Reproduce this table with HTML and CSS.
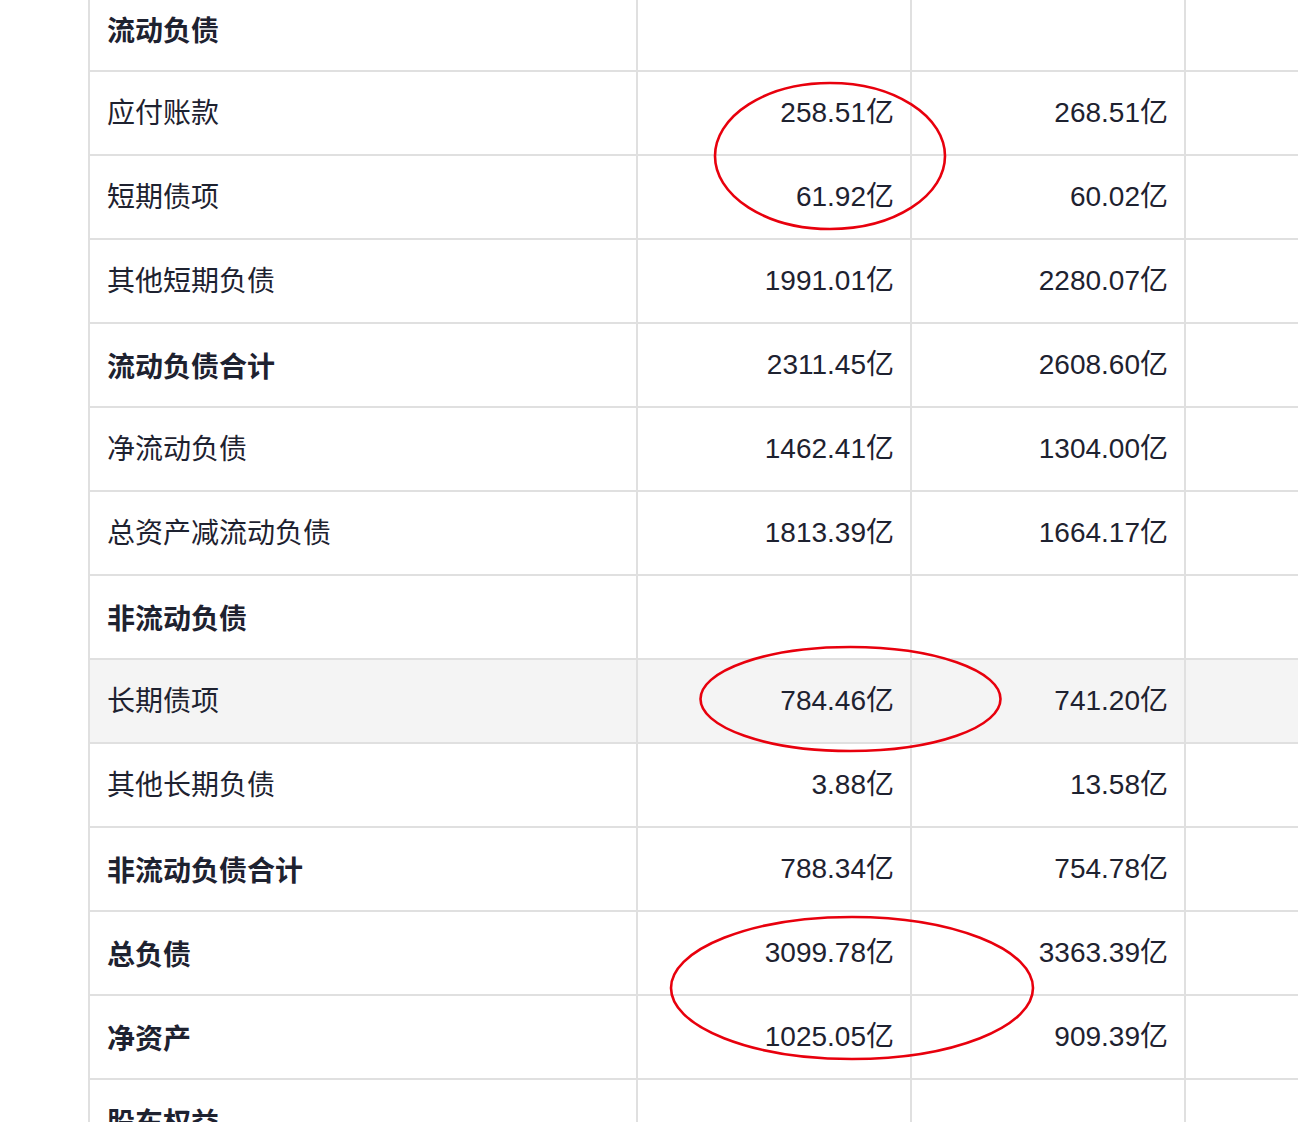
FILE: index.html
```html
<!DOCTYPE html>
<html lang="zh-CN">
<head>
<meta charset="utf-8">
<title>负债表</title>
<link rel="stylesheet" href="styles.css">
</head>
<body>
<div class="sheet">
  <div class="row"><div class="label bold">流动负债</div><div class="num"></div><div class="num"></div><div class="num"></div></div>
  <div class="row"><div class="label">应付账款</div><div class="num">258.51亿</div><div class="num">268.51亿</div><div class="num"></div></div>
  <div class="row"><div class="label">短期债项</div><div class="num">61.92亿</div><div class="num">60.02亿</div><div class="num"></div></div>
  <div class="row"><div class="label">其他短期负债</div><div class="num">1991.01亿</div><div class="num">2280.07亿</div><div class="num"></div></div>
  <div class="row"><div class="label bold">流动负债合计</div><div class="num">2311.45亿</div><div class="num">2608.60亿</div><div class="num"></div></div>
  <div class="row"><div class="label">净流动负债</div><div class="num">1462.41亿</div><div class="num">1304.00亿</div><div class="num"></div></div>
  <div class="row"><div class="label">总资产减流动负债</div><div class="num">1813.39亿</div><div class="num">1664.17亿</div><div class="num"></div></div>
  <div class="row"><div class="label bold">非流动负债</div><div class="num"></div><div class="num"></div><div class="num"></div></div>
  <div class="row hover"><div class="label">长期债项</div><div class="num">784.46亿</div><div class="num">741.20亿</div><div class="num"></div></div>
  <div class="row"><div class="label">其他长期负债</div><div class="num">3.88亿</div><div class="num">13.58亿</div><div class="num"></div></div>
  <div class="row"><div class="label bold">非流动负债合计</div><div class="num">788.34亿</div><div class="num">754.78亿</div><div class="num"></div></div>
  <div class="row"><div class="label bold">总负债</div><div class="num">3099.78亿</div><div class="num">3363.39亿</div><div class="num"></div></div>
  <div class="row"><div class="label bold">净资产</div><div class="num">1025.05亿</div><div class="num">909.39亿</div><div class="num"></div></div>
  <div class="row"><div class="label bold">股东权益</div><div class="num"></div><div class="num"></div><div class="num"></div></div>
</div>
<svg class="marks" width="1298" height="1122" viewBox="0 0 1298 1122" aria-hidden="true">
  <ellipse cx="830" cy="156" rx="115" ry="73"/>
  <ellipse cx="850.5" cy="699" rx="150" ry="52"/>
  <ellipse cx="852" cy="988" rx="181" ry="71"/>
</svg>
</body>
</html>
```
FILE: styles.css
```css
html, body {
  margin: 0;
  padding: 0;
  overflow: hidden;
  background: #ffffff;
}
body {
  position: relative;
  width: 1298px;
  height: 1122px;
  font-family: "Liberation Sans", "Noto Sans CJK SC", sans-serif;
  color: #1e2230;
}
.sheet {
  margin-top: -12px;
  margin-left: 88px;
  width: 1208px;
  overflow: hidden;
  border-left: 2px solid #e0e0e0;
  display: flex;
  flex-direction: column;
  gap: 2px;
  background: #e0e0e0;
}
.row {
  display: grid;
  grid-template-columns: 546px 272px 272px 272px;
  gap: 2px;
  height: 82px;
}
.row > div {
  background: #ffffff;
  display: flex;
  align-items: center;
  font-size: 28px;
  line-height: 1;
}
.row.hover > div {
  background: #f4f4f4;
}
.label {
  padding-left: 17px;
  padding-bottom: 4px;
  font-family: "Noto Sans CJK SC", sans-serif;
  font-weight: 400;
}
.label.bold {
  padding-bottom: 0;
  font-weight: 700;
}
.num {
  justify-content: flex-end;
  padding-right: 16px;
}
.marks {
  position: absolute;
  left: 0;
  top: 0;
  pointer-events: none;
}
.marks ellipse {
  fill: none;
  stroke: #e8000d;
  stroke-width: 2.6;
}
```
